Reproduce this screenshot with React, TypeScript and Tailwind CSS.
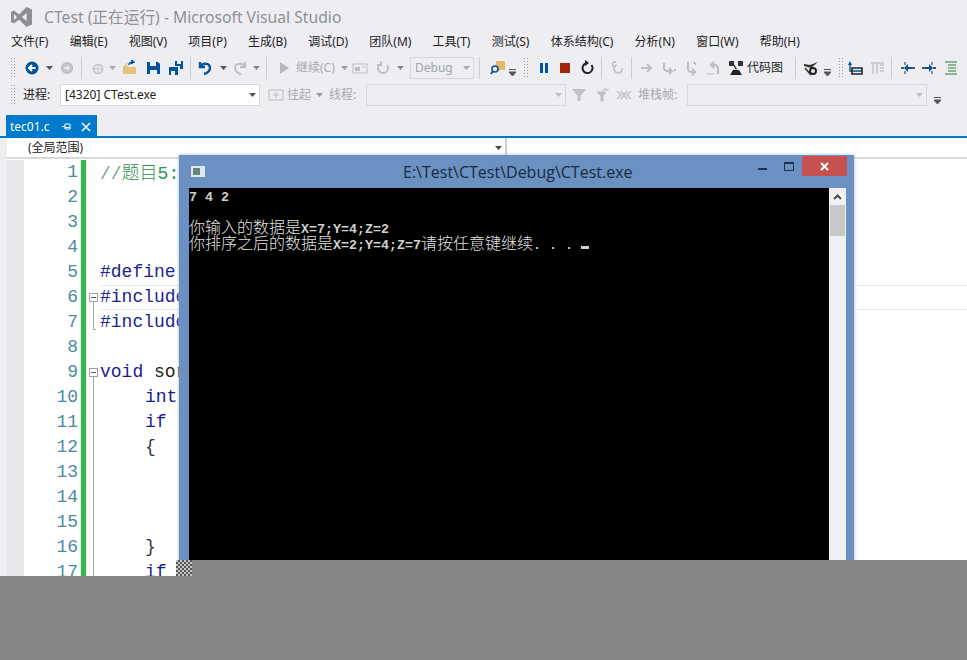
import type { ReactNode } from "react";

const menus = ["文件(F)", "编辑(E)", "视图(V)", "项目(P)", "生成(B)", "调试(D)", "团队(M)", "工具(T)", "测试(S)", "体系结构(C)", "分析(N)", "窗口(W)", "帮助(H)"];

const code: { n: number; fold?: "box" | "line" | "end"; text?: ReactNode }[] = [
  { n: 1, text: <><span className="text-[#7f9f8f]">//</span><span className="font-['Noto_Sans_CJK_SC'] font-light text-[#2f8f4f]">题目</span><span className="text-[#2f8f4f]">5:</span></> },
  { n: 2 },
  { n: 3 },
  { n: 4 },
  { n: 5, text: <span className="text-[#23238f]">#define</span> },
  { n: 6, fold: "box", text: <span className="text-[#23238f]">#include</span> },
  { n: 7, fold: "end", text: <span className="text-[#23238f]">#include</span> },
  { n: 8 },
  { n: 9, fold: "box", text: <><span className="text-[#1a1a9a]">void</span> <span className="text-[#222]">sor</span></> },
  { n: 10, fold: "line", text: <span className="ml-[45px] text-[#1a1a8a]">int</span> },
  { n: 11, fold: "line", text: <span className="ml-[45px] text-[#1a1a8a]">if</span> },
  { n: 12, fold: "line", text: <span className="ml-[45px] text-[#333]">{"{"}</span> },
  { n: 13, fold: "line" },
  { n: 14, fold: "line" },
  { n: 15, fold: "line" },
  { n: 16, fold: "line", text: <span className="ml-[45px] text-[#333]">{"}"}</span> },
  { n: 17, fold: "line", text: <span className="ml-[45px] text-[#1a1a8a]">if</span> },
];

function Grip({ className = "" }: { className?: string }) {
  return <div className={`h-[22px] w-[5px] bg-[radial-gradient(#9a9aa0_0.8px,transparent_0.9px)] bg-[length:3px_3px] ${className}`} />;
}

function Sep({ className = "" }: { className?: string }) {
  return <div className={`h-[22px] w-px bg-[#ccced3] ${className}`} />;
}

function Caret({ className = "", color = "#555" }: { className?: string; color?: string }) {
  return (
    <svg width="7" height="4" viewBox="0 0 7 4" className={className}>
      <path d="M0 0h7L3.5 4z" fill={color} />
    </svg>
  );
}

function OverflowCaret({ className = "" }: { className?: string }) {
  return (
    <svg width="7" height="7" viewBox="0 0 7 7" className={`mt-[9px] ${className}`}>
      <path d="M0 0.5h7M0 3h7L3.5 7z" stroke="#555" strokeWidth="1" fill="#555" />
    </svg>
  );
}

function Ico({ className = "", children }: { className?: string; children: ReactNode }) {
  return (
    <svg width="16" height="16" viewBox="0 0 16 16" className={className}>
      {children}
    </svg>
  );
}

const floppy = "M1 2h11l2 2v10H1z";

function ComboBox({ className, text, arrow = "#555" }: { className: string; text?: string; arrow?: string }) {
  return (
    <div className={`flex h-[22px] items-center justify-between border border-[#d6d7de] ${className}`}>
      <span className="pl-[4px]">{text}</span>
      <Caret className="mr-[3px]" color={arrow} />
    </div>
  );
}

function TopToolbar() {
  return (
    <div className="flex h-[27px] items-center">
      <Grip className="ml-[10px]" />
      <Ico className="ml-[9px]"><circle cx="8" cy="8" r="6.5" fill="#00539c" /><path d="M11.5 8H5M8 5L5 8l3 3" stroke="#fff" strokeWidth="2" fill="none" /></Ico>
      <Caret className="ml-[6px]" />
      <Ico className="ml-[6px]"><circle cx="8" cy="8" r="5.5" fill="#c4c5c8" stroke="#b5b6b9" /><path d="M5 8h5M8 6l2 2-2 2" stroke="#eee" strokeWidth="1.5" fill="none" /></Ico>
      <Sep className="ml-[6px]" />
      <Ico className="ml-[8px]"><circle cx="8" cy="9" r="4.5" fill="none" stroke="#c2c3c6" strokeWidth="1.6" /><path d="M4 9h8M8 5v8" stroke="#c2c3c6" /></Ico>
      <Caret className="ml-[3px]" color="#aaa" />
      <Ico className="ml-[6px]"><path d="M1 6h5l1 1h7v7H1z" fill="#e8c27a" /><path d="M3 6l2-3" stroke="#d8a850" /><path d="M7 5c0-2 1.500-3 4-3M9 0l3 2-3 2" stroke="#00539c" strokeWidth="1.500" fill="none" /></Ico>
      <Ico className="ml-[8px]"><path d={floppy} fill="#00539c" /><path d="M4 2h6v4H4z" fill="#eeeef2" /><path d="M4 10h7v4H4z" fill="#eeeef2" /></Ico>
      <Ico className="ml-[6px]"><path d="M1 7h9v8H1z" fill="#00539c" /><path d="M3 11h4v4H3z" fill="#eeeef2" /><path d="M7 1h8v8h-3V6H7z" fill="#00539c" /><path d="M9 1h4v3H9z" fill="#eeeef2" /></Ico>
      <Sep className="ml-[6px]" />
      <Ico className="ml-[6px]"><path d="M3 2v5h5M3.500 6.500C6 2.500 13 3 13 8c0 3-3 5.500-6 6" stroke="#00539c" strokeWidth="2.400" fill="none" /></Ico>
      <Caret className="ml-[7px]" />
      <Ico className="ml-[5px]"><path d="M13 2v5H8M12.500 6.500C10 2.500 3 3 3 8c0 3 3 5.500 6 6" stroke="#bdbec1" strokeWidth="2" fill="none" /></Ico>
      <Caret className="ml-[5px]" color="#888" />
      <Sep className="ml-[6px]" />
      <Ico className="ml-[9px]"><path d="M4 2l9 6-9 6z" fill="#b8b9bc" /></Ico>
      <span className="ml-[4px] w-[40px] text-[12px] text-[#a8a9ac]">继续(C)</span>
      <Caret className="ml-[5px]" color="#999" />
      <Ico className="ml-[4px]"><path d="M1 4h14v9H1z" fill="none" stroke="#bcbdc0" /><path d="M3 7h5v4H3z" fill="#bcbdc0" /><path d="M10 7h3" stroke="#bcbdc0" /></Ico>
      <Ico className="ml-[7px]"><path d="M12 5a5 5 0 1 1-6-1.500M6 1v4H2" stroke="#bcbdc0" strokeWidth="1.800" fill="none" /></Ico>
      <Caret className="ml-[6px]" color="#888" />
      <ComboBox className="ml-[6px] w-[64px] text-[12px] text-[#a2a3a6]" text="Debug" arrow="#aaa" />
      <Sep className="ml-[5px]" />
      <Ico className="ml-[10px]"><path d="M6 1h9v9H6z" fill="#e8b868" /><circle cx="5" cy="9" r="3" fill="#eeeef2" stroke="#00539c" strokeWidth="1.500" /><path d="M3 11l-2 3" stroke="#00539c" strokeWidth="1.800" /></Ico>
      <OverflowCaret className="ml-[3px]" />
      <Grip className="ml-[7px]" />
      <Ico className="ml-[8px]"><path d="M4 3h3v10H4zM9 3h3v10H9z" fill="#00539c" /></Ico>
      <Ico className="ml-[5px]"><path d="M3 3h10v10H3z" fill="#a1260d" /></Ico>
      <Ico className="ml-[7px]"><path d="M11.500 5a5 5 0 1 1-6-1.500" stroke="#222" strokeWidth="2" fill="none" /><path d="M5 0v6l4-3z" fill="#222" /></Ico>
      <Sep className="ml-[5px]" />
      <Ico className="ml-[7px]"><path d="M3 3l2 4M4 2h3M13 8a4 4 0 1 1-5-3" stroke="#c2c3c6" strokeWidth="1.800" fill="none" /></Ico>
      <Sep className="ml-[6px]" />
      <Ico className="ml-[7px]"><path d="M2 8h10M8 4l4 4-4 4" stroke="#bcbdc0" strokeWidth="2" fill="none" /></Ico>
      <Ico className="ml-[6px]"><path d="M3 3v5c0 2 2 3 4 3h3M8 8l3 3-3 3" stroke="#bcbdc0" strokeWidth="2" fill="none" /><path d="M13 10h2" stroke="#bcbdc0" strokeWidth="2" /></Ico>
      <Ico className="ml-[7px]"><path d="M4 2v7c0 2 2 3 4 3h3M8 9l3 3-3 3" stroke="#bcbdc0" strokeWidth="2" fill="none" /><path d="M9 2a4 4 0 0 1 3 3" stroke="#bcbdc0" /></Ico>
      <Ico className="ml-[5px]"><path d="M13 14V9c0-3-2-4-4-4H6M9 2L6 5l3 3" stroke="#bcbdc0" strokeWidth="2" fill="none" /><path d="M2 14h7" stroke="#bcbdc0" /></Ico>
      <Ico className="ml-[7px]"><path d="M1 1h5v5H1zM10 1h5v5h-5z" fill="#333" /><path d="M6 4l3 5-1 1H8L5 5z" fill="#333" /><path d="M5 10h6l3 5H2z" fill="#222" /></Ico>
      <span className="ml-[3px] text-[12px] leading-none text-[#222]">代码图</span>
      <Sep className="ml-[12px]" />
      <Ico className="ml-[7px]"><path d="M1 4l6 1 8-3-7 6-7-2z" fill="#333" /><circle cx="10" cy="11" r="3" fill="none" stroke="#222" strokeWidth="2" /><path d="M2 8l6 7" stroke="#333" strokeWidth="1.600" /></Ico>
      <OverflowCaret className="ml-[5px]" />
      <Grip className="ml-[7px]" />
      <Ico className="ml-[4px]"><path d="M3 1l-2 4h4z" fill="#00539c" /><path d="M3 4v7h12" stroke="#00539c" strokeWidth="1.400" fill="none" /><path d="M5 8h10v6H5z" fill="none" stroke="#222" strokeWidth="1.600" /></Ico>
      <Ico className="ml-[6px]"><path d="M2 3h13M4 3v11M8 3v11M11 5h4M11 8h4M11 11h4" stroke="#c2c3c6" strokeWidth="1.400" fill="none" /></Ico>
      <Sep className="ml-[6px]" />
      <Ico className="ml-[8px]"><path d="M1 8h3M12 8h3" stroke="#222" strokeWidth="1.600" /><path d="M5 2v3M5 11v3" stroke="#222" /><path d="M4 8l4-4v3h4v2H8v3z" fill="#00539c" /></Ico>
      <Ico className="ml-[5px]"><path d="M1 8h3M12 8h3" stroke="#222" strokeWidth="1.600" /><path d="M11 2v3M11 11v3" stroke="#222" /><path d="M12 8L8 4v3H4v2h4v3z" fill="#00539c" /></Ico>
      <Ico className="ml-[6px]"><path d="M2 2h12M5 5h8M5 8h8M5 11h8M2 14h12" stroke="#2b7a3d" strokeWidth="1.200" /></Ico>
    </div>
  );
}

function DebugToolbar() {
  return (
    <div className="flex h-[27px] items-center text-[12px]">
      <Grip className="ml-[10px]" />
      <span className="ml-[8px] w-[29px] text-[#222]">进程:</span>
      <ComboBox className="ml-[8px] w-[200px] bg-white text-[#222]" text="[4320] CTest.exe" />
      <Ico className="ml-[8px]"><path d="M1 3h14v10H1z" fill="none" stroke="#bcbdc0" /><path d="M5 8h6M8 5v6" stroke="#bcbdc0" /></Ico>
      <span className="ml-[3px] text-[#a8a9ac]">挂起</span>
      <Caret className="ml-[5px]" color="#999" />
      <span className="ml-[6px] w-[29px] text-[#a8a9ac]">线程:</span>
      <ComboBox className="ml-[8px] w-[200px]" arrow="#c0c0c0" />
      <Ico className="ml-[5px]"><path d="M1 2h14L9.500 9v5h-3V9z" fill="#c0c1c4" /></Ico>
      <Ico className="ml-[8px]"><path d="M2 5h9L8 9v5H6V9zM7 3h7M9 1l4 2" fill="#c0c1c4" stroke="#c0c1c4" /></Ico>
      <Ico className="ml-[5px]"><path d="M1 4l4 4-4 4M15 4l-4 4 4 4M5 4l6 8M11 4l-6 8" stroke="#c0c1c4" strokeWidth="1.400" fill="none" /></Ico>
      <span className="ml-[6px] w-[41px] whitespace-nowrap text-[#a8a9ac]">堆栈帧:</span>
      <ComboBox className="ml-[8px] w-[240px]" arrow="#c0c0c0" />
      <OverflowCaret className="ml-[7px] mt-[12px]" />
    </div>
  );
}

function FoldCell({ fold }: { fold?: "box" | "line" | "end" }) {
  return (
    <div className="relative h-full w-[14px] shrink-0">
      {fold === "box" && (
        <>
          <div className="absolute left-[3px] top-[8px] flex h-[9px] w-[9px] items-center justify-center border border-[#a0a0a0] bg-white">
            <div className="h-px w-[5px] bg-[#555]" />
          </div>
          <div className="absolute left-[7px] top-[17px] h-[8px] w-px bg-[#a8a8a8]" />
        </>
      )}
      {fold === "line" && <div className="absolute left-[7px] top-0 h-full w-px bg-[#a8a8a8]" />}
      {fold === "end" && <div className="absolute left-[7px] top-0 h-[20px] w-[3px] border-b border-l border-[#a8a8a8]" />}
    </div>
  );
}

function ConsoleWindow() {
  return (
    <div className="absolute left-[179px] top-[155px] flex h-[420px] w-[675px] flex-col bg-[#6a91c1] font-['Noto_Sans_CJK_SC',sans-serif] shadow-[0_0_3px_#9fb4d4]">
      <div className="relative flex h-[33px] shrink-0 items-center">
        <div className="ml-[12px] flex h-[11px] w-[14px] items-center border border-[#dfe6ef] bg-[#dfe6ef]">
          <div className="ml-px h-[7px] w-[7px] bg-[#5f8a7a]" />
        </div>
        <span className="ml-[198px] font-['Open_Sans'] text-[16px] text-[#1b2a3c]">E:\Test\CTest\Debug\CTest.exe</span>
        <div className="absolute left-[579px] top-[13px] h-[2px] w-[9px] bg-[#1c3050]" />
        <div className="absolute left-[605px] top-[7px] h-[9px] w-[10px] border border-t-2 border-[#1c3050]" />
        <div className="absolute left-[623px] top-px flex h-[20px] w-[45px] items-center justify-center bg-[#c75050]">
          <svg width="9" height="9" viewBox="0 0 9 9"><path d="M1 1l7 7M8 1L1 8" stroke="#fff" strokeWidth="2" /></svg>
        </div>
      </div>
      <div className="ml-[10px] flex min-h-0 flex-1">
        <div className="w-[640px] bg-black pt-[2px] text-[13.33px] leading-[16px] text-[#d0d0d0]">
          <div className="h-[16px] font-['Liberation_Mono'] font-bold whitespace-pre">7 4 2</div>
          <div className="h-[12px]" />
          <div className="h-[16px] whitespace-nowrap"><span className="text-[16px] font-light text-[#e0e0e0]">你输入的数据是</span><span className="font-['Liberation_Mono'] font-bold">X=7;Y=4;Z=2</span></div>
          <div className="h-[16px] whitespace-pre"><span className="text-[16px] font-light text-[#e0e0e0]">你排序之后的数据是</span><span className="font-['Liberation_Mono'] font-bold">X=2;Y=4;Z=7</span><span className="text-[16px] font-light text-[#e0e0e0]">请按任意键继续</span><span className="font-['Liberation_Mono'] font-bold">. . . </span><span className="inline-block h-[3px] w-[8px] bg-[#d0d0d0]" /></div>
        </div>
        <div className="flex w-[17px] flex-col items-center bg-[#eef0f5]">
          <svg width="9" height="6" viewBox="0 0 9 6" className="mt-[6px] bg-white"><path d="M1 5l3.500-3.500L8 5" stroke="#444" strokeWidth="2" fill="none" /></svg>
          <div className="mt-[5px] h-[31px] w-[15px] bg-[#c8c8c8]" />
        </div>
      </div>
    </div>
  );
}

export default function App() {
  return (
    <div className="relative h-[660px] w-[967px] overflow-hidden bg-[#eeeef2] font-['Noto_Sans','Noto_Sans_CJK_SC',sans-serif]">
      <div className="flex h-[33px] items-center">
        <svg width="22" height="20" viewBox="0 0 22 20" className="ml-[11px] mt-[1px]">
          <path d="M0 5l3-1.500L8 7.500 15.500 0 21 2.500v15L15.500 20 8 12.500 3 16.500 0 15zM3 7v6l3-3zM15.500 6l-4.500 4 4.500 4z" fill="#8f8f93" fillRule="evenodd" />
        </svg>
        <span className="ml-[11px] pt-[2px] text-[15.7px] text-[#8f9094]">CTest (正在运行) - Microsoft Visual Studio</span>
      </div>
      <div className="flex h-[17px] items-center gap-[21.2px] pl-[11px] text-[12px] text-[#222]">
        {menus.map((m) => (
          <span key={m}>{m}</span>
        ))}
      </div>
      <div className="h-[4px]" />
      <TopToolbar />
      <DebugToolbar />
      <div className="mt-[7px] flex h-[21px] pl-[6px]">
        <div className="flex w-[91px] items-center bg-[#007acc] pl-[4px] pt-[2px] text-[12px] text-white">
          <span>tec01.c</span>
          <svg width="9" height="9" viewBox="0 0 9 9" className="ml-[12px]"><path d="M0 4.500h3M3 2v5h5V2zM3 5.500h5" stroke="#fff" fill="none" /></svg>
          <svg width="10" height="10" viewBox="0 0 10 10" className="ml-[10px]"><path d="M1 1l8 8M9 1L1 9" stroke="#fff" strokeWidth="1.500" /></svg>
        </div>
      </div>
      <div className="h-[2px] bg-[#007acc]" />
      <div className="flex">
        <div className="w-[7px] shrink-0" />
        <div className="min-w-0 flex-1 bg-white">
          <div className="flex h-[21px] items-center border-b-2 border-[#d8d8da] text-[12px] text-[#222]">
            <span className="ml-[21px] w-[467px]">(全局范围)</span>
            <Caret className="mr-[3px]" color="#444" />
            <div className="h-full w-[2px] bg-[#ccced3]" />
          </div>
          <div className="h-px bg-white" />
          <div className="flex">
            <div className="w-[17px] shrink-0 bg-[#e6e7e8]" />
            <div className="min-w-0 flex-1 font-['Liberation_Mono',monospace] text-[18px]">
              {code.map((line) => (
                <div key={line.n} className="flex h-[25px] items-center">
                  <span className="w-[54px] shrink-0 text-right font-['Liberation_Mono'] text-[18px] text-[#4e8a9c]">{line.n}</span>
                  <div className="ml-[3px] h-full w-[5px] shrink-0 bg-[#2cbc4e]" />
                  <FoldCell fold={line.fold} />
                  <span className={`flex h-full flex-1 items-center whitespace-pre ${line.n === 6 ? "border-y border-[#e8e8e8]" : ""}`}>
                    <span>{line.text}</span>
                  </span>
                </div>
              ))}
            </div>
          </div>
        </div>
      </div>
      <ConsoleWindow />
      <div className="absolute bottom-0 left-0 h-[84px] w-[176px] bg-[#858585]" />
      <div className="absolute bottom-0 left-[176px] h-[100px] w-[791px] bg-[#858585]" />
      <div className="absolute left-[176px] top-[560px] h-[16px] w-[16px] bg-[repeating-conic-gradient(#555_0_25%,#c8c8c8_0_50%)] bg-[length:4px_4px]" />
    </div>
  );
}
